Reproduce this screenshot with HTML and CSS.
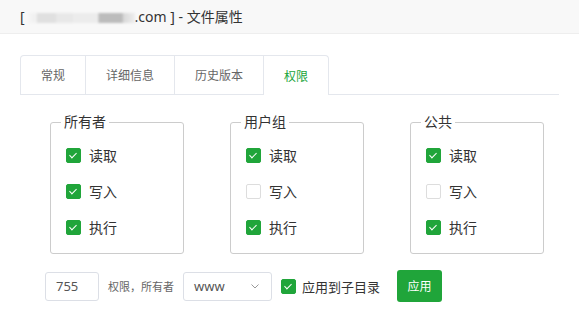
FILE: index.html
```html
<!DOCTYPE html>
<html lang="zh-CN">
<head>
  <meta charset="UTF-8">
  <title>文件属性</title>
  <link rel="stylesheet" href="styles.css">
</head>
<body>
  <div class="title-bar">
    <span class="title-text">[<span class="masked"></span>.com ] - 文件属性</span>
  </div>

  <div class="content">
    <div class="tabs">
      <div class="tab">常规</div>
      <div class="tab">详细信息</div>
      <div class="tab">历史版本</div>
      <div class="tab active">权限</div>
    </div>

    <div class="perm-groups">
      <fieldset class="perm-box">
        <legend>所有者</legend>
        <div class="check-row"><span class="box checked"></span>读取</div>
        <div class="check-row"><span class="box checked"></span>写入</div>
        <div class="check-row"><span class="box checked"></span>执行</div>
      </fieldset>

      <fieldset class="perm-box">
        <legend>用户组</legend>
        <div class="check-row"><span class="box checked"></span>读取</div>
        <div class="check-row"><span class="box"></span>写入</div>
        <div class="check-row"><span class="box checked"></span>执行</div>
      </fieldset>

      <fieldset class="perm-box">
        <legend>公共</legend>
        <div class="check-row"><span class="box checked"></span>读取</div>
        <div class="check-row"><span class="box"></span>写入</div>
        <div class="check-row"><span class="box checked"></span>执行</div>
      </fieldset>
    </div>

    <div class="action-row">
      <div class="mode-input">755</div>
      <span class="owner-label">权限，所有者</span>
      <div class="select">
        <span>www</span>
        <svg class="chevron" width="8" height="5" viewBox="0 0 8 5">
          <path d="M0.5 0.5 L4 4 L7.5 0.5" fill="none" stroke="#999" stroke-width="1"/>
        </svg>
      </div>
      <span class="box checked"></span>
      <span class="sub-label">应用到子目录</span>
      <button class="btn-apply">应用</button>
    </div>
  </div>
</body>
</html>
```

FILE: styles.css
```css
body {
  margin: 0;
  background: #fff;
  color: #333;
  font-family: "Noto Sans", "Noto Sans CJK SC", sans-serif;
}
.title-bar {
  height: 34px;
  box-sizing: border-box;
  display: flex;
  align-items: center;
  padding: 0 0 2px 20px;
  background: #f8f8f8;
  border-bottom: 1px solid #eee;
  font-size: 14px;
  color: #333;
}
.title-text {
  white-space: nowrap;
}
.masked {
  display: inline-block;
  width: 106px;
  height: 10px;
  margin: 0 0 -1px 4px;
  background: linear-gradient(90deg, #f4f4f4 0, #f0f0f0 7%, #e0e0e0 8%, #e0e0e0 25%, #e8e8e8 26%, #e8e8e8 41%, #ececec 42%, #ececec 65%, #bcbcbc 66%, #bcbcbc 88%, #d8d8d8 89%, #eeeeee 100%);
  filter: blur(0.8px);
}
.content {
  padding: 21px 20px 0;
}
.tabs {
  display: flex;
  height: 39px;
  border-bottom: 1px solid #e4e7ed;
}
.tab {
  display: flex;
  align-items: center;
  padding: 0 20px;
  margin-right: -1px;
  border: 1px solid #e4e7ed;
  border-bottom: none;
  font-size: 12px;
  color: #666;
  background: #fff;
}
.tab:first-child { border-top-left-radius: 4px; }
.tab:last-child { border-top-right-radius: 4px; }
.tab.active {
  color: #20a53a;
  margin-bottom: -1px;
}
.perm-groups {
  display: flex;
  gap: 46px;
  padding-left: 30px;
  margin-top: 17px;
}
.perm-box {
  width: 134px;
  flex-shrink: 0;
  box-sizing: border-box;
  margin: 0;
  padding: 5px 0 8px 10px;
  border: 1px solid #ccc;
  border-radius: 3px;
}
.perm-box legend {
  padding: 0 3px;
  font-size: 14px;
  line-height: 20px;
  color: #333;
}
.check-row {
  display: flex;
  align-items: center;
  gap: 8px;
  height: 36px;
  padding-left: 5px;
  font-size: 14px;
  color: #333;
}
.box {
  width: 15px;
  height: 15px;
  box-sizing: border-box;
  border: 1px solid #ddd;
  border-radius: 2px;
  background: #fff;
  position: relative;
  flex-shrink: 0;
}
.box.checked {
  border-color: #20a53a;
  background: #20a53a;
}
.box.checked::after {
  content: "";
  position: absolute;
  left: 4px;
  top: 2px;
  width: 3px;
  height: 6px;
  border: solid #fff;
  border-width: 0 1px 1px 0;
  transform: rotate(45deg);
}
.action-row {
  display: flex;
  align-items: center;
  padding-left: 25px;
  margin-top: 16px;
}
.mode-input {
  width: 54px;
  height: 29px;
  box-sizing: border-box;
  display: flex;
  align-items: center;
  padding-left: 10px;
  border: 1px solid #dcdfe6;
  border-radius: 3px;
  font-size: 13px;
  color: #555;
}
.owner-label {
  margin: 0 9px 0 9px;
  font-size: 11px;
  color: #666;
}
.select {
  width: 89px;
  height: 29px;
  box-sizing: border-box;
  display: flex;
  align-items: center;
  justify-content: space-between;
  padding: 0 12px 0 10px;
  border: 1px solid #dcdfe6;
  border-radius: 3px;
  font-size: 13px;
  color: #555;
  margin-right: 9px;
}
.sub-label {
  margin: 0 17px 0 6px;
  font-size: 13px;
  color: #333;
}
.btn-apply {
  width: 45px;
  height: 32px;
  border: none;
  border-radius: 3px;
  background: #20a53a;
  color: #fff;
  font-family: inherit;
  font-size: 12px;
  padding: 0;
}
```
